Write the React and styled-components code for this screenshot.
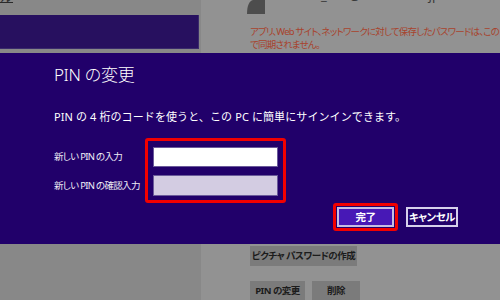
import React from "react";
import styled, { createGlobalStyle } from "styled-components";

const Global = createGlobalStyle`
  html, body { margin: 0; padding: 0; }
  body {
    font-family: "Noto Sans", "Noto Sans CJK JP", sans-serif;
    background: #929292;
  }
`;

const Page = styled.div`
  position: relative;
  width: 500px;
  height: 300px;
  overflow: hidden;
  display: flex;
`;

const LeftCol = styled.div`
  width: 201px;
  flex-shrink: 0;
  background: #888888;
  display: flex;
  flex-direction: column;
`;

const Fragment = styled.div`
  flex-shrink: 0;
  height: 4px;
  overflow: hidden;
  display: flex;
  align-items: flex-end;
  font-size: 13px;
  line-height: 15px;
  color: #2a2a2a;
  white-space: nowrap;
  margin-left: -39px;
  text-decoration: underline;
`;

const NavBlock = styled.div`
  flex-shrink: 0;
  width: 199px;
  height: 34px;
  margin-top: 11px;
  background: #27105f;
  box-shadow: inset 0 -1px 0 #3a2a6c, inset -1px 0 0 #3a2a6c;
`;

const RightCol = styled.div`
  flex: 1;
  background: #929292;
  padding-left: 49px;
  display: flex;
  flex-direction: column;
  & > * {
    flex-shrink: 0;
  }
`;

const AccountRow = styled.div`
  height: 14px;
  display: flex;
  align-items: flex-start;
  gap: 29px;
  margin-left: -11px;
`;

const Email = styled.div`
  margin-top: -13px;
  font-size: 13px;
  line-height: 16px;
  color: #3a3a3a;
  white-space: nowrap;
`;

const Warning = styled.div`
  margin-top: 11px;
  font-size: 9.5px;
  line-height: 13px;
  color: #a8432d;
  white-space: nowrap;
  letter-spacing: -0.8px;
  font-feature-settings: "palt";
`;

const Spacer = styled.div`
  height: 195px;
`;

const GrayRow = styled.div`
  display: flex;
  gap: 7px;
  margin-bottom: 15px;
`;

const GrayButton = styled.div`
  width: ${(p) => p.$w}px;
  height: 20px;
  background: #7b7b7b;
  color: #1c1c1c;
  font-size: 9.5px;
  font-weight: 700;
  line-height: 20px;
  text-align: center;
  white-space: nowrap;
  letter-spacing: -0.5px;
  font-feature-settings: "palt";
`;

const Modal = styled.div`
  position: absolute;
  top: 53px;
  left: 0;
  right: 0;
  height: 191px;
  box-sizing: border-box;
  background: #21006a;
  padding: 10px 42px 13px 54px;
  display: flex;
  flex-direction: column;
  color: #ffffff;
  & > * {
    flex-shrink: 0;
  }
`;

const Title = styled.div`
  font-size: 17px;
  font-weight: 300;
  line-height: 24px;
  letter-spacing: -0.4px;
`;

const Desc = styled.div`
  margin-top: 22px;
  font-size: 11px;
  line-height: 16px;
  white-space: nowrap;
  letter-spacing: 0.1px;
`;

const FormRow = styled.div`
  margin-top: 13px;
  display: flex;
`;

const LabelCol = styled.div`
  width: 91px;
  padding-top: 9px;
  display: flex;
  flex-direction: column;
  gap: 8px;
`;

const Label = styled.div`
  height: ${(p) => p.$h}px;
  line-height: ${(p) => p.$h}px;
  font-size: 9.5px;
  white-space: nowrap;
  color: #f0eef6;
  letter-spacing: -0.7px;
  font-feature-settings: "palt";
`;

const RedBox = styled.div`
  border: 3px solid #f20000;
  border-radius: 3px;
  padding: 6px 5px 4px 5px;
  width: 125px;
  display: flex;
  flex-direction: column;
  gap: 8px;
`;

const Field = styled.div`
  height: ${(p) => p.$h}px;
  box-sizing: border-box;
  border: 1px solid #6a5a9a;
  background: ${(p) => (p.$filled ? "#ffffff" : "#d3cce2")};
`;

const ButtonRow = styled.div`
  display: flex;
  justify-content: flex-end;
  align-items: center;
  gap: 8px;
`;

const Highlight = styled.div`
  border: 3px solid #f20000;
  border-radius: 3px;
  padding: 1px;
  display: flex;
`;

const DialogButton = styled.div`
  width: ${(p) => p.$w}px;
  height: 20px;
  box-sizing: border-box;
  border: 2px solid ${(p) => (p.$primary ? "#c6bde4" : "#d6d0ec")};
  background: ${(p) => (p.$primary ? "#4718b6" : "transparent")};
  color: #ffffff;
  font-size: 10.5px;
  font-weight: 700;
  line-height: 16px;
  text-align: center;
  white-space: nowrap;
  letter-spacing: -0.5px;
  font-feature-settings: "palt";
`;

const Avatar = () => (
  <svg width="26" height="14" viewBox="0 0 26 14">
    <path d="M8 14 C8 6 10 1 14 0 L26 0 L26 14 Z" fill="#4d4d4d" />
  </svg>
);

export default function App() {
  return (
    <>
      <Global />
      <Page>
        <LeftCol>
          <Fragment>ローカル</Fragment>
          <NavBlock />
        </LeftCol>
        <RightCol>
          <AccountRow>
            <Avatar />
            <Email>user_003@hotmail.co.jp</Email>
          </AccountRow>
          <Warning>
            アプリ、Web サイト、ネットワークに対して保存したパスワードは、この PC
            <br />
            で同期されません。
          </Warning>
          <Spacer />
          <GrayRow>
            <GrayButton $w={107}>ピクチャ パスワードの作成</GrayButton>
          </GrayRow>
          <GrayRow>
            <GrayButton $w={55}>PIN の変更</GrayButton>
            <GrayButton $w={48}>削除</GrayButton>
          </GrayRow>
        </RightCol>
        <Modal>
          <Title>PIN の変更</Title>
          <Desc>PIN の 4 桁のコードを使うと、この PC に簡単にサインインできます。</Desc>
          <FormRow>
            <LabelCol>
              <Label $h={20}>新しい PIN の入力</Label>
              <Label $h={21}>新しい PIN の確認入力</Label>
            </LabelCol>
            <RedBox>
              <Field $h={20} $filled />
              <Field $h={21} />
            </RedBox>
          </FormRow>
          <ButtonRow>
            <Highlight>
              <DialogButton $primary $w={57}>完了</DialogButton>
            </Highlight>
            <DialogButton $w={52}>キャンセル</DialogButton>
          </ButtonRow>
        </Modal>
      </Page>
    </>
  );
}
